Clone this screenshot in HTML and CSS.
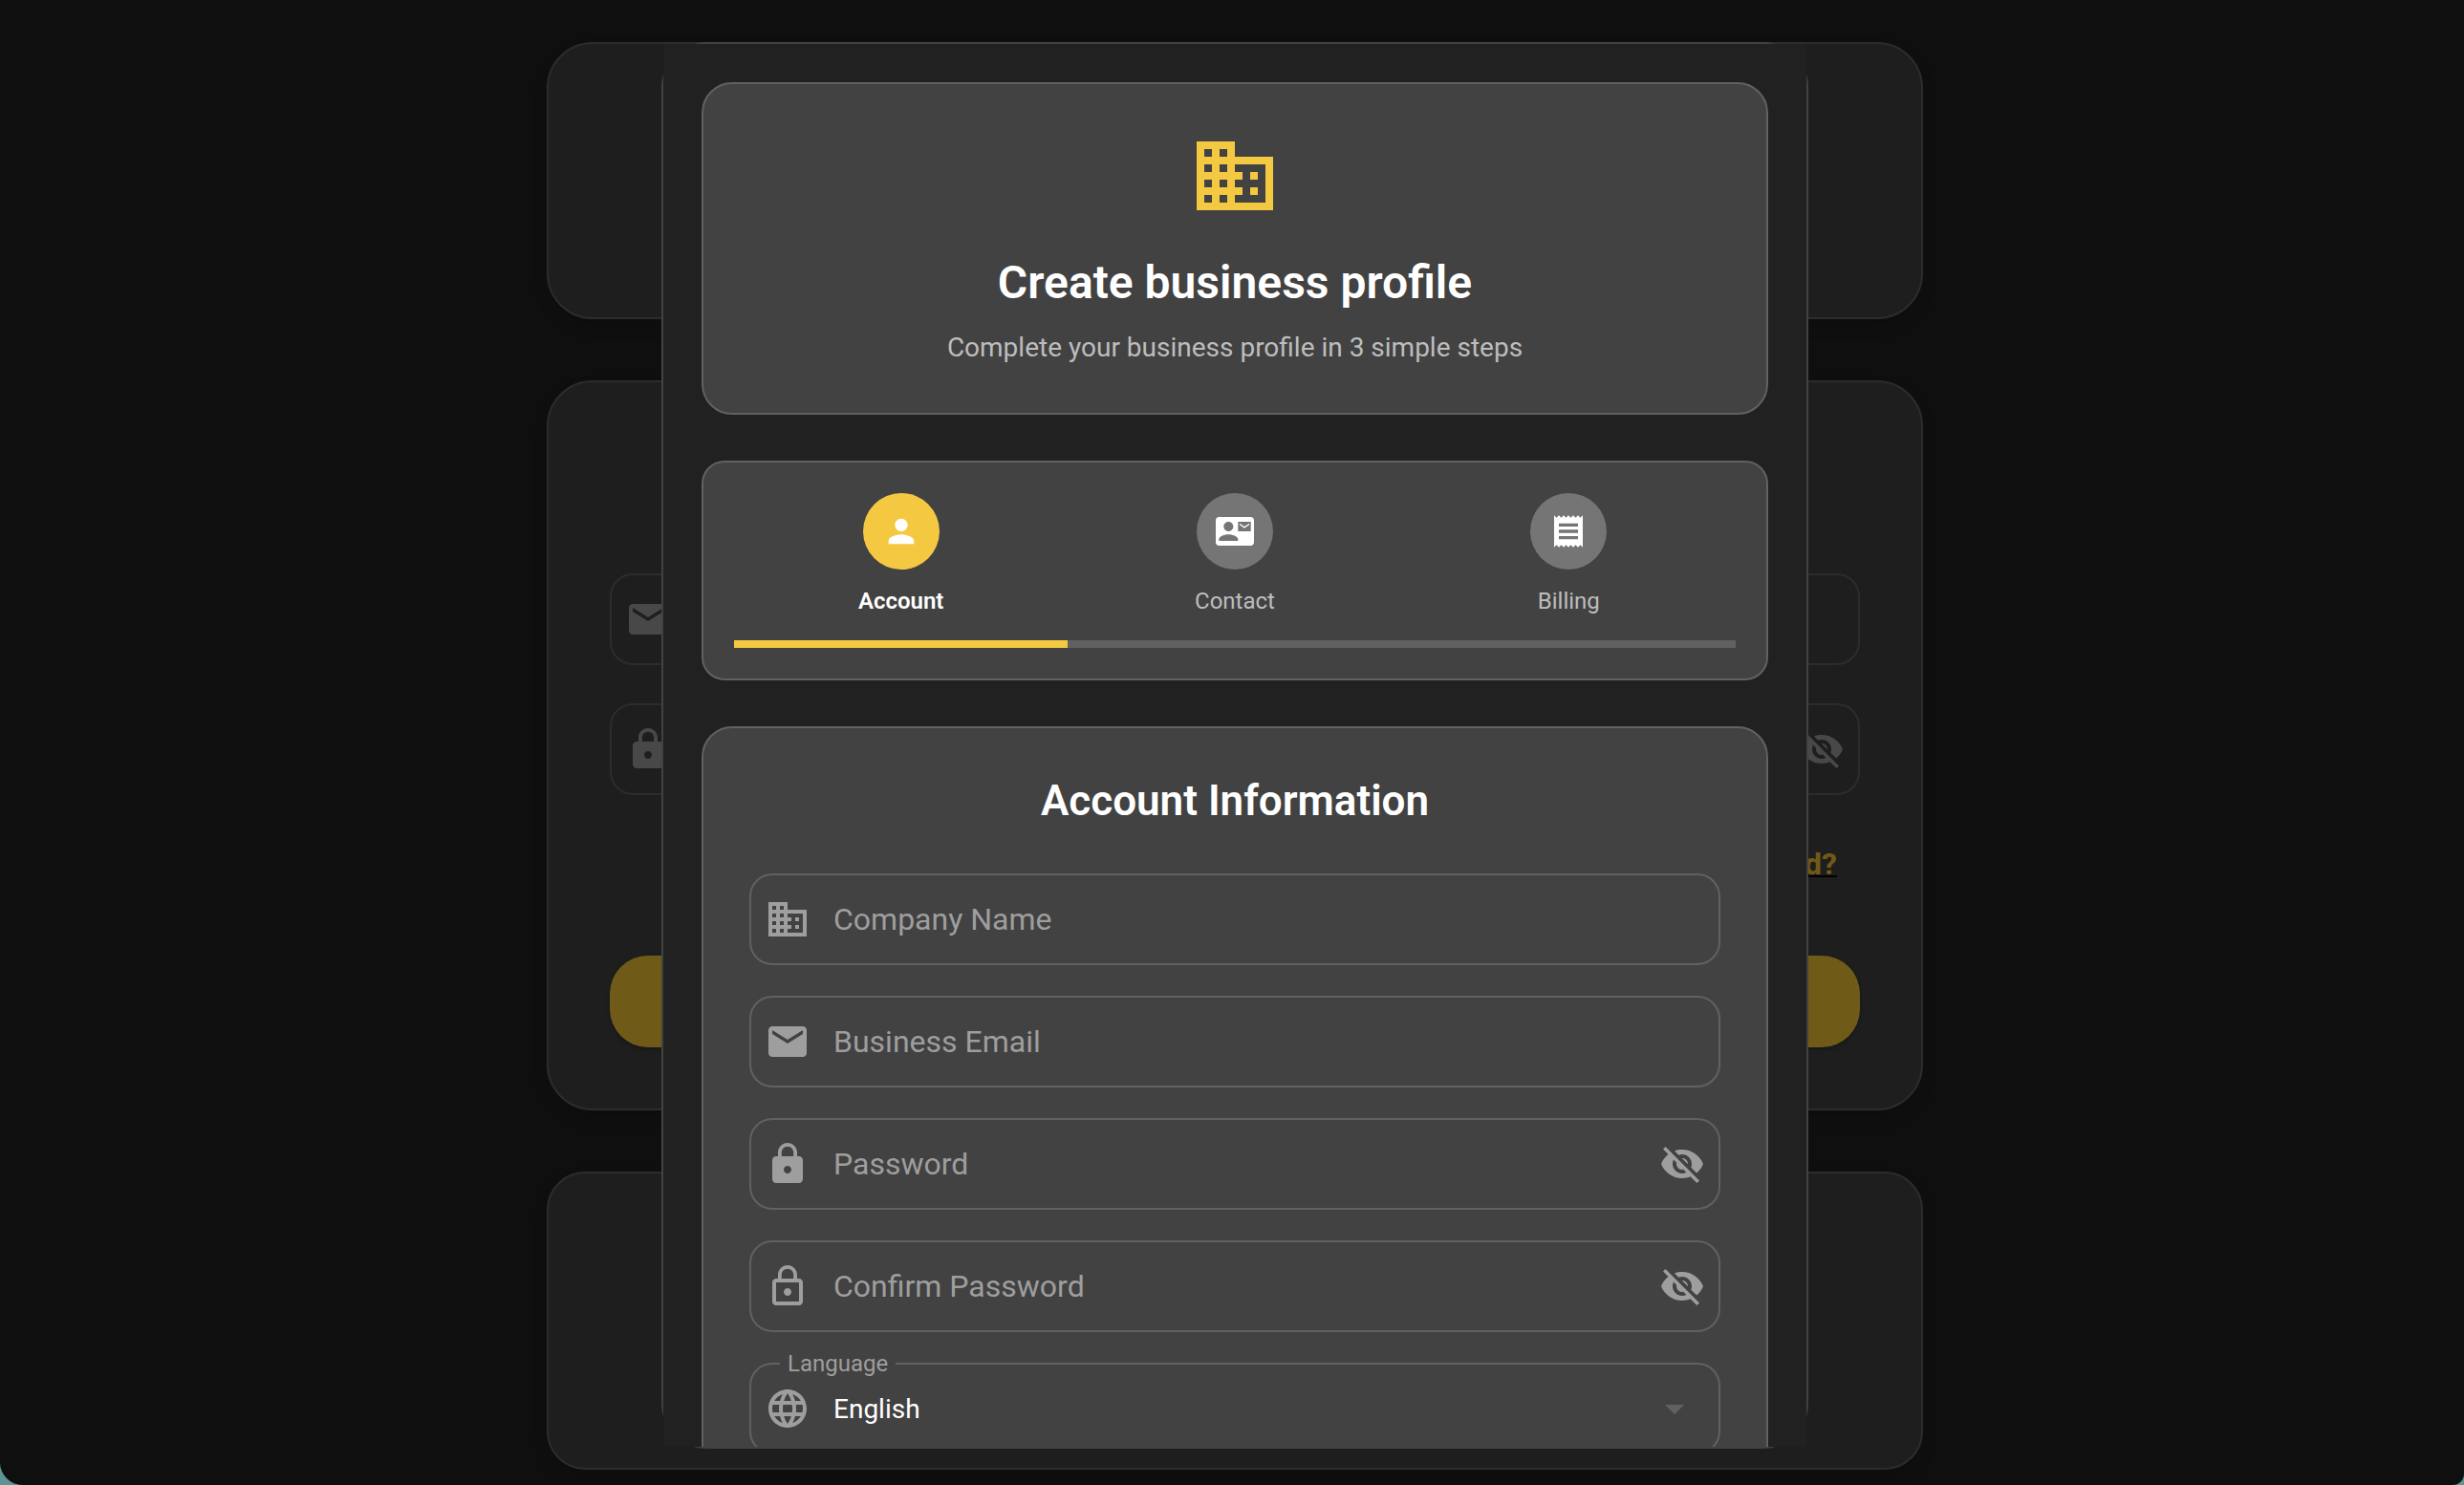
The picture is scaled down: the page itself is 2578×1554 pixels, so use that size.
FILE: index.html
```html
<!DOCTYPE html>
<html lang="en">
<head>
<meta charset="utf-8">
<meta name="viewport" content="width=device-width, initial-scale=1">
<title>Create business profile</title>
<link rel="stylesheet" href="styles.css">
</head>
<body>
<svg class="sprite" aria-hidden="true">
  <symbol id="i-business" viewBox="0 0 24 24"><path d="M12 7V3H2v18h20V7H12zM6 19H4v-2h2v2zm0-4H4v-2h2v2zm0-4H4V9h2v2zm0-4H4V5h2v2zm4 12H8v-2h2v2zm0-4H8v-2h2v2zm0-4H8V9h2v2zm0-4H8V5h2v2zm10 12h-8v-2h2v-2h-2v-2h2v-2h-2V9h8v10zm-2-8h-2v2h2v-2zm0 4h-2v2h2v-2z"/></symbol>
  <symbol id="i-person" viewBox="0 0 24 24"><path d="M12 12c2.21 0 4-1.79 4-4s-1.79-4-4-4-4 1.79-4 4 1.79 4 4 4zm0 2c-2.67 0-8 1.34-8 4v2h16v-2c0-2.660-5.330-4-8-4z"/></symbol>
  <symbol id="i-contact" viewBox="0 0 24 24"><path d="M21 8V7l-3 2-3-2v1l3 2 3-2zm1-5H2C.9 3 0 3.900 0 5v14c0 1.100.9 2 2 2h20c1.100 0 1.990-.9 1.990-2L24 5c0-1.100-.9-2-2-2zM8 6c1.660 0 3 1.340 3 3s-1.340 3-3 3-3-1.340-3-3 1.340-3 3-3zm6 12H2v-1c0-2 4-3.100 6-3.100s6 1.100 6 3.100v1zm8-6h-8V6h8v6z"/></symbol>
  <symbol id="i-receipt" viewBox="0 0 24 24"><path d="M18 17H6v-2h12v2zm0-4H6v-2h12v2zm0-4H6V7h12v2zM3 22l1.500-1.500L6 22l1.500-1.500L9 22l1.500-1.500L12 22l1.500-1.500L15 22l1.500-1.500L18 22l1.500-1.500L21 22V2l-1.500 1.500L18 2l-1.500 1.500L15 2l-1.500 1.500L12 2l-1.500 1.500L9 2 7.500 3.500 6 2 4.500 3.500 3 2v20z"/></symbol>
  <symbol id="i-email" viewBox="0 0 24 24"><path d="M20 4H4c-1.100 0-1.990.9-1.990 2L2 18c0 1.100.9 2 2 2h16c1.100 0 2-.9 2-2V6c0-1.100-.9-2-2-2zm0 4l-8 5-8-5V6l8 5 8-5v2z"/></symbol>
  <symbol id="i-lock" viewBox="0 0 24 24"><path d="M18 8h-1V6c0-2.760-2.240-5-5-5S7 3.240 7 6v2H6c-1.100 0-2 .9-2 2v10c0 1.100.9 2 2 2h12c1.100 0 2-.9 2-2V10c0-1.100-.9-2-2-2zm-6 9c-1.100 0-2-.9-2-2s.9-2 2-2 2 .9 2 2-.9 2-2 2zm3.100-9H8.900V6c0-1.710 1.390-3.100 3.100-3.100 1.710 0 3.100 1.390 3.100 3.100v2z"/></symbol>
  <symbol id="i-lock-outline" viewBox="0 0 24 24"><path d="M12 17c1.100 0 2-.9 2-2s-.9-2-2-2-2 .9-2 2 .9 2 2 2zm6-9h-1V6c0-2.760-2.240-5-5-5S7 3.240 7 6v2H6c-1.100 0-2 .9-2 2v10c0 1.100.9 2 2 2h12c1.100 0 2-.9 2-2V10c0-1.100-.9-2-2-2zM8.900 6c0-1.710 1.390-3.100 3.100-3.100s3.100 1.390 3.100 3.100v2H8.900V6zM18 20H6V10h12v10z"/></symbol>
  <symbol id="i-eye-off" viewBox="0 0 24 24"><path d="M12 7c2.760 0 5 2.240 5 5 0 .65-.13 1.260-.36 1.830l2.920 2.920c1.510-1.260 2.700-2.890 3.430-4.750-1.730-4.390-6-7.500-11-7.500-1.400 0-2.740.25-3.980.7l2.160 2.160C10.740 7.130 11.350 7 12 7zM2 4.270l2.280 2.280.46.46C3.080 8.300 1.780 10.020 1 12c1.730 4.390 6 7.500 11 7.500 1.550 0 3.030-.3 4.380-.84l.42.42L19.730 22 21 20.730 3.270 3 2 4.270zM7.530 9.800l1.550 1.550c-.05.21-.08.43-.08.65 0 1.660 1.340 3 3 3 .22 0 .44-.03.65-.08l1.550 1.550c-.67.33-1.410.53-2.200.53-2.760 0-5-2.240-5-5 0-.79.2-1.530.53-2.200zm4.310-.78l3.150 3.150.02-.16c0-1.660-1.340-3-3-3l-.17.01z"/></symbol>
  <symbol id="i-globe" viewBox="0 0 24 24"><path d="M11.990 2C6.470 2 2 6.480 2 12s4.470 10 9.990 10C17.520 22 22 17.520 22 12S17.520 2 11.990 2zm6.930 6h-2.950c-.32-1.250-.78-2.450-1.380-3.560 1.840.63 3.370 1.910 4.330 3.560zM12 4.040c.83 1.200 1.480 2.530 1.910 3.960h-3.820c.43-1.430 1.080-2.760 1.910-3.960zM4.260 14C4.100 13.360 4 12.690 4 12s.1-1.360.26-2h3.380c-.08.66-.14 1.320-.14 2 0 .68.06 1.340.14 2H4.260zm.82 2h2.950c.32 1.250.78 2.450 1.380 3.560-1.840-.63-3.370-1.900-4.330-3.560zm2.950-8H5.080c.96-1.660 2.490-2.930 4.330-3.560C8.810 5.550 8.350 6.750 8.030 8zM12 19.960c-.83-1.200-1.480-2.530-1.910-3.960h3.820c-.43 1.430-1.080 2.760-1.910 3.960zM14.340 14H9.660c-.09-.66-.16-1.320-.16-2 0-.68.07-1.350.16-2h4.680c.09.65.16 1.320.16 2 0 .68-.07 1.340-.16 2zm.25 5.560c.6-1.110 1.060-2.310 1.380-3.560h2.950c-.96 1.650-2.490 2.930-4.330 3.560zM16.360 14c.08-.66.14-1.320.14-2 0-.68-.06-1.340-.14-2h3.380c.16.64.26 1.310.26 2s-.1 1.360-.26 2h-3.380z"/></symbol>
  <symbol id="i-drop" viewBox="0 0 24 24"><path d="M7 10l5 5 5-5z"/></symbol>
</svg>

<div class="window">
  <main class="login" inert>
    <section class="login-card login-brand"></section>
    <form class="login-card login-form">
      <div class="field">
        <svg class="icon"><use href="#i-email"/></svg>
        <input class="input" type="email" aria-label="Email">
      </div>
      <div class="field">
        <svg class="icon"><use href="#i-lock"/></svg>
        <input class="input" type="password" aria-label="Password">
        <button class="toggle" type="button" aria-label="Show password"><svg class="icon"><use href="#i-eye-off"/></svg></button>
      </div>
      <a class="forgot" href="#">Forgot password?</a>
      <button class="submit" type="submit" aria-label="Log in"></button>
    </form>
    <section class="login-card login-signup"></section>
  </main>

  <div class="backdrop">
    <div class="dialog" role="dialog" aria-modal="true" aria-labelledby="dialog-title">
      <div class="dialog-body">
        <header class="panel intro">
          <svg class="intro-icon"><use href="#i-business"/></svg>
          <h1 class="intro-title" id="dialog-title">Create business profile</h1>
          <p class="intro-text">Complete your business profile in 3 simple steps</p>
        </header>

        <section class="panel steps">
          <ol class="step-list">
            <li class="step step-active">
              <span class="step-dot"><svg class="step-icon"><use href="#i-person"/></svg></span>
              <span class="step-label">Account</span>
            </li>
            <li class="step">
              <span class="step-dot"><svg class="step-icon"><use href="#i-contact"/></svg></span>
              <span class="step-label">Contact</span>
            </li>
            <li class="step">
              <span class="step-dot"><svg class="step-icon"><use href="#i-receipt"/></svg></span>
              <span class="step-label">Billing</span>
            </li>
          </ol>
          <div class="progress" role="progressbar" aria-label="Step 1 of 3" aria-valuemin="0" aria-valuemax="3" aria-valuenow="1">
            <div class="progress-fill" style="width: 33.333%"></div>
          </div>
        </section>

        <form class="panel account">
          <h2 class="account-title">Account Information</h2>
          <div class="field-list">
            <label class="field">
              <svg class="icon"><use href="#i-business"/></svg>
              <input class="input" type="text" placeholder="Company Name" aria-label="Company Name">
            </label>
            <label class="field">
              <svg class="icon"><use href="#i-email"/></svg>
              <input class="input" type="email" placeholder="Business Email" aria-label="Business Email">
            </label>
            <div class="field">
              <svg class="icon"><use href="#i-lock"/></svg>
              <input class="input" type="password" placeholder="Password" aria-label="Password">
              <button class="toggle" type="button" aria-label="Show password"><svg class="icon"><use href="#i-eye-off"/></svg></button>
            </div>
            <div class="field">
              <svg class="icon"><use href="#i-lock-outline"/></svg>
              <input class="input" type="password" placeholder="Confirm Password" aria-label="Confirm Password">
              <button class="toggle" type="button" aria-label="Show password"><svg class="icon"><use href="#i-eye-off"/></svg></button>
            </div>
            <div class="field">
              <label class="field-notch" for="language">Language</label>
              <svg class="icon"><use href="#i-globe"/></svg>
              <select class="select" id="language"><option>English</option></select>
              <svg class="icon drop"><use href="#i-drop"/></svg>
            </div>
          </div>
        </form>
      </div>
    </div>
  </div>
</div>
</body>
</html>
```
FILE: styles.css
```css
*, *::before, *::after { box-sizing: border-box; }

:root {
  --page: #212121;
  --panel: #424242;
  --line: #616161;
  --muted: #9e9e9e;
  --soft: #bdbdbd;
  --accent: #f5c842;
  --accent-strong: #f5c534;
}

body {
  margin: 0;
  background: #5e9491;
  color: #fff;
  font-family: Roboto, "Liberation Sans", sans-serif;
  font-size: 28px;
}

h1, h2, p, ol { margin: 0; padding: 0; }
button, input, select { font: inherit; color: inherit; }

.sprite { position: absolute; width: 0; height: 0; }

.window {
  position: relative;
  height: 100vh;
  overflow: hidden;
  background: var(--page);
  border-radius: 0 0 12px 24px;
}

/* Login page under the dialog */
.login {
  display: flex;
  flex-direction: column;
  gap: 64px;
  width: 100%;
  max-width: 1446px;
  margin: 0 auto;
  padding: 44px 0 16px 6px;
}

.login-card {
  background: var(--panel);
  border: 2px solid var(--line);
  border-radius: 48px;
  box-shadow: 0 8px 16px rgba(0, 0, 0, 0.1);
}

.login-brand { min-height: 290px; }

.login-form {
  display: flex;
  flex-direction: column;
  padding: 200px 64px 64px;
}

.login-form .field + .field { margin-top: 40px; }

.login-signup { min-height: 312px; border-radius: 40px; }

.forgot {
  align-self: flex-end;
  padding: 0 24px;
  margin: 24px 0 48px;
  color: var(--accent-strong);
  font-size: 32px;
  font-weight: 700;
  line-height: 96px;
  text-decoration: underline #000 2px;
}

.submit {
  height: 96px;
  border: 0;
  border-radius: 40px;
  background: var(--accent-strong);
  box-shadow: 0 2px 4px rgba(0, 0, 0, 0.3);
}

/* Dialog */
.backdrop {
  position: absolute;
  inset: 0;
  display: flex;
  justify-content: center;
  padding: 44px 0 38px 6px;
  background: rgba(0, 0, 0, 0.54);
}

.dialog {
  display: flex;
  width: 100%;
  max-width: 1200px;
  border: 2px solid var(--panel);
  border-radius: 48px;
}

.dialog-body {
  flex: 1;
  display: flex;
  flex-direction: column;
  gap: 48px;
  padding: 40px;
  overflow-y: auto;
  scrollbar-width: none;
  background: var(--page);
}

.panel {
  flex: none;
  background: var(--panel);
  border: 2px solid var(--line);
  border-radius: 32px;
}

.intro {
  display: flex;
  flex-direction: column;
  align-items: center;
  padding: 48px;
  text-align: center;
}

.intro-icon { width: 96px; height: 96px; fill: var(--accent); }

.intro-title {
  margin: 32px 0 16px;
  font-size: 48px;
  font-weight: 600;
  line-height: 64px;
}

.intro-text { color: var(--soft); line-height: 40px; }

/* Steps */
.steps { padding: 32px; border-radius: 24px; }

.step-list { display: flex; list-style: none; }

.step {
  flex: 1;
  display: flex;
  flex-direction: column;
  align-items: center;
  gap: 16px;
}

.step-dot {
  display: grid;
  place-items: center;
  width: 80px;
  height: 80px;
  border-radius: 50%;
  background: #757575;
}

.step-icon { width: 40px; height: 40px; fill: #fff; }

.step-label { color: var(--soft); font-size: 24px; line-height: 34px; }

.step-active .step-dot { background: var(--accent); }
.step-active .step-label { color: #fff; font-weight: 600; }

.progress { height: 8px; margin-top: 24px; background: var(--line); }
.progress-fill { height: 100%; background: var(--accent); }

/* Account form */
.account { padding: 48px; }

.account-title {
  font-size: 44px;
  font-weight: 600;
  line-height: 56px;
  text-align: center;
}

.field-list {
  display: flex;
  flex-direction: column;
  gap: 32px;
  margin-top: 48px;
}

.field {
  position: relative;
  display: flex;
  align-items: center;
  gap: 24px;
  height: 96px;
  padding: 0 14px;
  border: 2px solid var(--line);
  border-radius: 24px;
}

.icon { flex: none; display: block; width: 48px; height: 48px; fill: var(--muted); }

.input, .select {
  flex: 1;
  min-width: 0;
  height: 100%;
  padding: 0;
  border: 0;
  outline: 0;
  background: none;
}

.input { font-size: 32px; }
.input::placeholder { color: var(--muted); opacity: 1; }

.select { appearance: none; }

.toggle { flex: none; padding: 0; border: 0; background: none; }

.drop { margin-right: 8px; fill: var(--line); pointer-events: none; }

/* Floating label sits over the field's top border */
.field-notch {
  position: absolute;
  top: -16px;
  left: 30px;
  padding: 0 8px;
  background: var(--panel);
  color: var(--muted);
  font-size: 24px;
  line-height: 30px;
}
```
